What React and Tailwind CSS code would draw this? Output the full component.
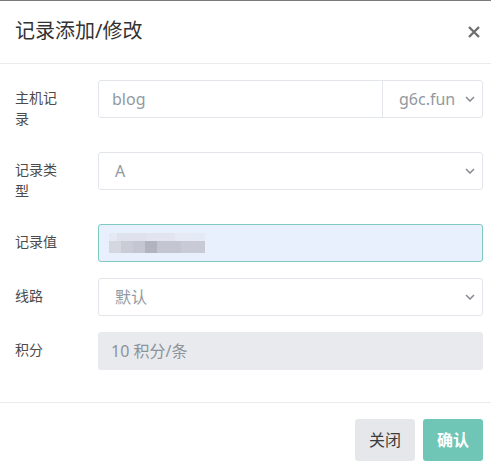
import React from "react";

const font = { fontFamily: '"Noto Sans", "Noto Sans CJK SC", sans-serif' };

const Chevron = () => (
  <svg width="10" height="6" viewBox="0 0 10 6" className="shrink-0">
    <path d="M1 1l4 4 4-4" fill="none" stroke="#8a8d93" strokeWidth="1.6" />
  </svg>
);

const Row = ({ label, children }) => (
  <div className="flex mb-4">
    <label className="w-[52px] shrink-0 py-[7px] text-[14px] leading-[21px] text-[#4b4b4b]">
      {label}
    </label>
    <div className="ml-[31px] flex-1">{children}</div>
  </div>
);

const Select = ({ value }) => (
  <div className="h-[38px] flex items-center justify-between pl-4 pr-[7px] border border-[#e3e6ea] rounded-[3px] bg-white text-[16px] text-[#9299a1]">
    <span>{value}</span>
    <Chevron />
  </div>
);

export default function App() {
  return (
    <div style={font} className="w-[491px] h-[469px] overflow-hidden bg-white border-t border-[#7b7b7b]">
      <div className="h-[63px] flex items-center justify-between px-[15px] border-b border-[#e9ecef]">
        <h4 className="text-[20px] text-[#333] mt-[-2px]">记录添加/修改</h4>
        <svg width="12" height="12" viewBox="0 0 12 12" className="mr-[-4px]">
          <path d="M1 1l10 10M11 1L1 11" stroke="#6f6f6f" strokeWidth="2.4" />
        </svg>
      </div>

      <div className="pt-4 pb-4 pl-[15px] pr-2">
        <Row label="主机记录">
          <div className="h-[38px] flex border border-[#e3e6ea] rounded-[3px] text-[16px] text-[#9299a1]">
            <div className="flex-1 flex items-center px-[13px]">blog</div>
            <div className="w-[100px] flex items-center justify-between pl-4 pr-[7px] border-l border-[#e3e6ea]">
              <span>g6c.fun</span>
              <Chevron />
            </div>
          </div>
        </Row>
        <Row label="记录类型">
          <Select value="A" />
        </Row>
        <Row label="记录值">
          <div className="h-[38px] flex items-center px-[10px] border border-[#7fcabf] rounded-[3px] bg-[#e8f0fe]">
            <div className="flex flex-col">
              <div className="flex h-[8px]">
                <div className="w-[8px] bg-[#e4e9f3]" />
                <div className="w-[30px] bg-[#dfe2ec]" />
                <div className="w-[28px] bg-[#e2e5ef]" />
                <div className="w-[30px] bg-[#e6eaf4]" />
              </div>
              <div className="flex h-[12px]">
                <div className="w-[12px] bg-[#d4d6e0]" />
                <div className="w-[12px] bg-[#c9cbd6]" />
                <div className="w-[12px] bg-[#c4c6d1]" />
                <div className="w-[12px] bg-[#b1b3be]" />
                <div className="w-[24px] bg-[#c3c5d0]" />
                <div className="w-[24px] bg-[#c8cad5]" />
              </div>
            </div>
          </div>
        </Row>
        <Row label="线路">
          <Select value="默认" />
        </Row>
        <Row label="积分">
          <div className="h-[38px] flex items-center px-[13px] rounded-[3px] bg-[#e9eaed] text-[16px] text-[#8c939b]">
            10 积分/条
          </div>
        </Row>
      </div>

      <div className="border-t border-[#e9ecef] flex justify-end gap-2 pt-4 pr-2">
        <button className="w-[60px] h-[42px] rounded-[3px] bg-[#e6e7eb] text-[16px] text-[#3c3c3c]">关闭</button>
        <button className="w-[60px] h-[42px] rounded-[3px] bg-[#6fc6b7] text-[16px] font-bold text-white">确认</button>
      </div>
    </div>
  );
}
